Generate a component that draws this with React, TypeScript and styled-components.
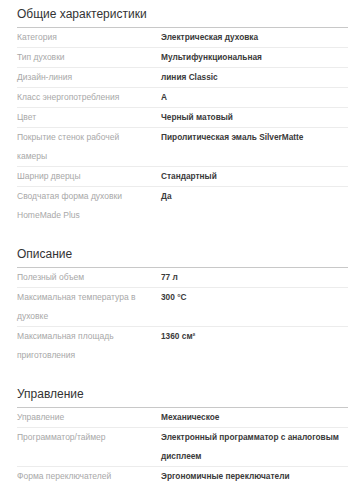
import { createGlobalStyle } from "styled-components";
import styled from "styled-components";

const GlobalStyle = createGlobalStyle`
  body {
    margin: 0;
    background: #fff;
    font-family: "Liberation Sans", Arial, sans-serif;
  }
`;

const Page = styled.div`
  padding-left: 17px;
  overflow: hidden;
`;

const Section = styled.section`
  & + & {
    margin-top: 15px;
  }
`;

const Title = styled.h2`
  margin: 0;
  height: 27px;
  line-height: 29px;
  font-size: 12px;
  font-weight: normal;
  color: #333;
  border-bottom: 1px solid #c8c8c8;
`;

const Row = styled.div`
  display: grid;
  grid-template-columns: 144px 1fr;
  border-bottom: 1px solid #ececec;
  &:last-child {
    border-bottom: none;
  }
`;

const Label = styled.div`
  padding-right: 20px;
  font-size: 8.5px;
  line-height: 19px;
  color: #a8a8a8;
`;

const Value = styled.div`
  font-size: 8.3px;
  line-height: 19px;
  font-weight: bold;
  color: #3a3a3a;
`;

type Spec = [string, string];

const groups: { title: string; rows: Spec[] }[] = [
  {
    title: "Общие характеристики",
    rows: [
      ["Категория", "Электрическая духовка"],
      ["Тип духовки", "Мультифункциональная"],
      ["Дизайн-линия", "линия Classic"],
      ["Класс энергопотребления", "A"],
      ["Цвет", "Черный матовый"],
      ["Покрытие стенок рабочей камеры", "Пиролитическая эмаль SilverMatte"],
      ["Шарнир дверцы", "Стандартный"],
      ["Сводчатая форма духовки HomeMade Plus", "Да"],
    ],
  },
  {
    title: "Описание",
    rows: [
      ["Полезный объем", "77 л"],
      ["Максимальная температура в духовке", "300 °C"],
      ["Максимальная площадь приготовления", "1360 см²"],
    ],
  },
  {
    title: "Управление",
    rows: [
      ["Управление", "Механическое"],
      ["Программатор/таймер", "Электронный программатор с аналоговым дисплеем"],
      ["Форма переключателей", "Эргономичные переключатели"],
    ],
  },
];

export default function App() {
  return (
    <>
      <GlobalStyle />
      <Page>
        {groups.map((g) => (
          <Section key={g.title}>
            <Title>{g.title}</Title>
            {g.rows.map(([label, value]) => (
              <Row key={label}>
                <Label>{label}</Label>
                <Value>{value}</Value>
              </Row>
            ))}
          </Section>
        ))}
      </Page>
    </>
  );
}
